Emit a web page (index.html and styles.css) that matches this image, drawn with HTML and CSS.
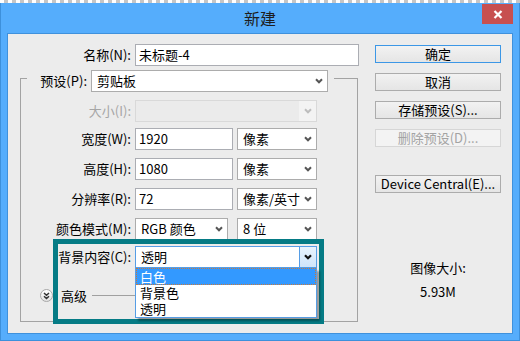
FILE: index.html
```html
<!DOCTYPE html>
<html lang="zh-CN">
<head>
<meta charset="utf-8">
<title>新建</title>
<link rel="stylesheet" href="styles.css">
</head>
<body>
<div class="checker"></div>
<div class="window">
  <div class="titlebar">
    <span></span>
    <div class="title">新建</div>
    <div class="close">
      <svg width="10" height="9" viewBox="0 0 10 9"><path d="M1.5 1 L8.5 8 M8.5 1 L1.5 8" stroke="#fff" stroke-width="2.2" fill="none"/></svg>
    </div>
  </div>
  <div class="client">
    <div class="left">
      <div class="row name-row">
        <div class="lbl">名称(N):</div>
        <div class="input w-name">未标题-4</div>
      </div>
      <div class="group">
        <div class="legend">
          <div class="lbl legend-lbl">预设(P):</div>
          <div class="select w-preset"><span>剪贴板</span><span class="arr"><svg class="chev" width="8" height="6" viewBox="0 0 8 6"><path d="M1 1.3 L4 4.3 L7 1.3" fill="none" stroke="#555" stroke-width="2"/></svg></span></div>
        </div>
        <div class="row">
          <div class="lbl dis">大小(I):</div>
          <div class="select dis-sel w-full"><span></span><span class="arr dis-arr"><svg class="chev" width="8" height="6" viewBox="0 0 8 6"><path d="M1 1.3 L4 4.3 L7 1.3" fill="none" stroke="#bdbdbd" stroke-width="2"/></svg></span></div>
        </div>
        <div class="row t">
          <div class="lbl">宽度(W):</div>
          <div class="ctrls">
            <div class="input w-num">1920</div>
            <div class="select w-unit"><span>像素</span><span class="arr"><svg class="chev" width="8" height="6" viewBox="0 0 8 6"><path d="M1 1.3 L4 4.3 L7 1.3" fill="none" stroke="#555" stroke-width="2"/></svg></span></div>
          </div>
        </div>
        <div class="row">
          <div class="lbl">高度(H):</div>
          <div class="ctrls">
            <div class="input w-num">1080</div>
            <div class="select w-unit"><span>像素</span><span class="arr"><svg class="chev" width="8" height="6" viewBox="0 0 8 6"><path d="M1 1.3 L4 4.3 L7 1.3" fill="none" stroke="#555" stroke-width="2"/></svg></span></div>
          </div>
        </div>
        <div class="row">
          <div class="lbl">分辨率(R):</div>
          <div class="ctrls">
            <div class="input w-num">72</div>
            <div class="select w-unit"><span>像素/英寸</span><span class="arr"><svg class="chev" width="8" height="6" viewBox="0 0 8 6"><path d="M1 1.3 L4 4.3 L7 1.3" fill="none" stroke="#555" stroke-width="2"/></svg></span></div>
          </div>
        </div>
        <div class="row">
          <div class="lbl">颜色模式(M):</div>
          <div class="ctrls wide-gap">
            <div class="select w-mode"><span>RGB 颜色</span><span class="arr"><svg class="chev" width="8" height="6" viewBox="0 0 8 6"><path d="M1 1.3 L4 4.3 L7 1.3" fill="none" stroke="#555" stroke-width="2"/></svg></span></div>
            <div class="select w-unit"><span>8 位</span><span class="arr"><svg class="chev" width="8" height="6" viewBox="0 0 8 6"><path d="M1 1.3 L4 4.3 L7 1.3" fill="none" stroke="#555" stroke-width="2"/></svg></span></div>
          </div>
        </div>
        <div class="row t">
          <div class="lbl">背景内容(C):</div>
          <div class="combo">
            <div class="select focus w-full"><span>透明</span><span class="arr btnarr"><svg class="chev" width="8" height="6" viewBox="0 0 8 6"><path d="M1 1.3 L4 4.3 L7 1.3" fill="none" stroke="#111" stroke-width="2.2"/></svg></span></div>
            <div class="list">
              <div class="opt sel">白色</div>
              <div class="opt">背景色</div>
              <div class="opt">透明</div>
            </div>
          </div>
        </div>
        <div class="adv">
          <div class="circle"><svg width="7" height="8" viewBox="0 0 7 8"><path d="M1 1 L3.5 3.3 L6 1 M1 4.3 L3.5 6.6 L6 4.3" fill="none" stroke="#333" stroke-width="1.5"/></svg></div>
          <div class="adv-lbl">高级</div>
          <div class="adv-line"></div>
        </div>
      </div>
    </div>
    <div class="right">
      <div class="btn default">确定</div>
      <div class="btn">取消</div>
      <div class="btn">存储预设(S)...</div>
      <div class="btn disabled">删除预设(D)...</div>
      <div class="btn device">Device Central(E)...</div>
      <div class="info">
        <div class="info-line">图像大小:</div>
        <div class="info-line second">5.93M</div>
      </div>
    </div>
    <div class="hl"></div>
  </div>
</div>
</body>
</html>
```
FILE: styles.css
```css
* { box-sizing: border-box; }
html, body { margin: 0; padding: 0; }
body {
  width: 520px;
  height: 341px;
  overflow: hidden;
  background: #fff;
  font-family: "Noto Sans CJK SC", "Noto Sans", sans-serif;
  font-size: 13px;
  color: #000;
}
.checker {
  height: 3px;
  background: repeating-linear-gradient(90deg, #ffffff 0 4px, #c6c6c6 4px 8px);
}
.window {
  position: relative;
  height: 338px;
  background: #55adfc;
  box-shadow: inset 1px 0 0 #3d90db, inset -1px 0 0 #3d90db, inset 0 -1px 0 #3d90db;
  padding: 0 7px;
  display: flex;
  flex-direction: column;
}
.titlebar {
  height: 30px;
  display: grid;
  grid-template-columns: 1fr auto 1fr;
  align-items: center;
}
.title {
  font-size: 16px;
  line-height: 30px;
  color: #1d1d1d;
}
.close {
  justify-self: end;
  align-self: start;
  margin-top: 1px;
  width: 31px;
  height: 20px;
  background: #c75050;
  display: flex;
  align-items: center;
  justify-content: center;
}
.close svg { display: block; }
.client {
  position: relative;
  height: 301px;
  background: #ececec;
  border: 1px solid #3f91dc;
  display: flex;
  padding: 10px 0 0 12px;
}
.left {
  width: 340px;
  display: flex;
  flex-direction: column;
}
.right {
  width: 126px;
  margin-left: 15px;
  padding-top: 1px;
  display: flex;
  flex-direction: column;
  gap: 10px;
}
.row {
  display: grid;
  grid-template-columns: 110px auto;
  column-gap: 4px;
  align-items: center;
  height: 22px;
}
.name-row { padding-left: 1px; }
.lbl {
  text-align: right;
  white-space: nowrap;
  line-height: 22px;
}
.lbl.dis { color: #a6a6a6; }
.group {
  margin-top: 12px;
  width: 338px;
  height: 244px;
  border: 1px solid #a3a3a3;
  display: flex;
  flex-direction: column;
}
.group .row { margin-top: 8px; }
.group .row.t { margin-top: 6px; }
.legend {
  margin: -9px 0 0 6px;
  width: 307px;
  height: 22px;
  background: #ececec;
  display: flex;
  align-items: center;
  gap: 4px;
}
.legend-lbl { width: 60px; }
.ctrls { display: flex; gap: 4px; }
.ctrls.wide-gap { gap: 9px; }
.input {
  height: 22px;
  border: 1px solid #abadb3;
  background: #fff;
  padding: 0 3px;
  line-height: 20px;
  white-space: nowrap;
}
.select {
  height: 22px;
  border: 1px solid #acacac;
  background: #fff;
  display: flex;
  align-items: center;
  justify-content: space-between;
  padding-left: 5px;
  line-height: 20px;
  white-space: nowrap;
}
.arr {
  width: 17px;
  align-self: stretch;
  display: flex;
  align-items: center;
  justify-content: center;
}
.chev { display: block; }
.w-name { width: 224px; }
.w-preset { width: 237px; }
.w-full { width: 182px; }
.w-num { width: 98px; }
.w-unit { width: 80px; }
.w-mode { width: 93px; }
.dis-sel {
  border-color: #d9d9d9;
  background: #ebebeb;
}
.dis-arr { background: #f3f3f3; }
.combo {
  position: relative;
  width: 182px;
}
.select.focus { border-color: #569de5; }
.btnarr {
  width: 17px;
  background: linear-gradient(#e8f3fd, #cfe5fa);
  border-left: 1px solid #569de5;
}
.list {
  position: absolute;
  left: 0;
  top: 100%;
  width: 182px;
  background: #fff;
  border: 1px solid #569de5;
  border-top: none;
  box-shadow: 3px 3px 2px rgba(0, 0, 0, 0.35);
  z-index: 2;
}
.opt {
  height: 16px;
  line-height: 16px;
  padding-left: 4px;
  white-space: nowrap;
}
.opt.sel {
  height: 17px;
  line-height: 15px;
  padding-left: 3px;
  background: #3399ff;
  color: #fff;
  border: 1px dotted #c9793a;
}
.adv {
  display: flex;
  align-items: center;
  margin-top: 21px;
  padding-left: 19px;
  height: 13px;
}
.circle {
  width: 13px;
  height: 13px;
  border-radius: 50%;
  border: 1px solid #a8a8a8;
  background: linear-gradient(#ffffff, #e2e2e2);
  display: flex;
  align-items: center;
  justify-content: center;
}
.circle svg { display: block; }
.adv-lbl {
  margin-left: 8px;
  line-height: 13px;
  white-space: nowrap;
}
.adv-line {
  margin-left: 5px;
  width: 150px;
  height: 1px;
  background: #a0a0a0;
}
.btn {
  height: 18px;
  border: 1px solid #acacac;
  background: linear-gradient(#f2f2f2, #e5e5e5);
  display: flex;
  align-items: center;
  justify-content: center;
  white-space: nowrap;
  line-height: 16px;
}
.btn.default { border-color: #3c97e6; }
.btn.disabled {
  border-color: #d6d6d6;
  background: #f3f3f3;
  color: #a3a3a3;
}
.btn.device { margin-top: 18px; }
.info {
  margin-top: 57px;
  display: flex;
  flex-direction: column;
  align-items: center;
}
.info-line { line-height: 16px; }
.info-line.second { margin-top: 8px; }
.hl {
  position: absolute;
  left: 45px;
  top: 205px;
  width: 271px;
  height: 85px;
  border: 5px solid #057b85;
  pointer-events: none;
}
```
